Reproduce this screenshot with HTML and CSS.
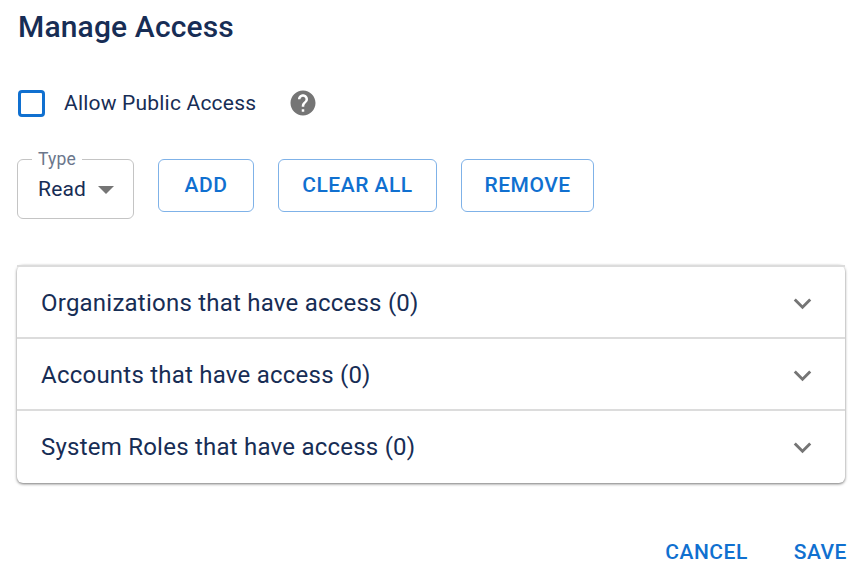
FILE: index.html
```html
<!DOCTYPE html>
<html lang="en">
<head>
  <meta charset="UTF-8">
  <title>Manage Access</title>
  <link rel="stylesheet" href="styles.css">
</head>
<body>
<div class="dialog">
  <h2 class="title">Manage Access</h2>

  <div class="public-row">
    <span class="checkbox"></span>
    <span class="public-label">Allow Public Access</span>
    <svg class="help" width="30" height="30" viewBox="0 0 24 24"><path d="M12 2C6.48 2 2 6.48 2 12s4.48 10 10 10 10-4.48 10-10S17.52 2 12 2zm1 17h-2v-2h2v2zm2.07-7.75l-.9.92C13.45 12.9 13 13.5 13 15h-2v-.5c0-1.1.45-2.1 1.17-2.83l1.24-1.26c.37-.36.59-.86.59-1.41 0-1.1-.9-2-2-2s-2 .9-2 2H8c0-2.21 1.79-4 4-4s4 1.79 4 4c0 .88-.36 1.68-.93 2.25z"/></svg>
  </div>

  <div class="actions-row">
    <div class="type-select">
      <span class="type-label">Type</span>
      <span class="type-value">Read</span>
      <span class="type-caret"></span>
    </div>
    <button class="btn btn-add">ADD</button>
    <button class="btn btn-clear">CLEAR ALL</button>
    <button class="btn btn-remove">REMOVE</button>
  </div>

  <div class="accordion">
    <div class="acc-row">
      <span>Organizations that have access (0)</span>
      <svg class="chevron" width="35" height="35" viewBox="0 0 24 24"><path d="M7.41 8.59 12 13.17l4.59-4.58L18 10l-6 6-6-6z"/></svg>
    </div>
    <div class="acc-row">
      <span>Accounts that have access (0)</span>
      <svg class="chevron" width="35" height="35" viewBox="0 0 24 24"><path d="M7.41 8.59 12 13.17l4.59-4.58L18 10l-6 6-6-6z"/></svg>
    </div>
    <div class="acc-row">
      <span>System Roles that have access (0)</span>
      <svg class="chevron" width="35" height="35" viewBox="0 0 24 24"><path d="M7.41 8.59 12 13.17l4.59-4.58L18 10l-6 6-6-6z"/></svg>
    </div>
  </div>

  <div class="footer">
    <button class="link-btn">CANCEL</button>
    <button class="link-btn">SAVE</button>
  </div>
</div>
</body>
</html>
```

FILE: styles.css
```css
html, body {
  margin: 0;
  height: 100%;
  overflow: hidden;
  background: #fff;
}

body {
  font-family: Roboto, "Liberation Sans", sans-serif;
  color: #172d55;
}

.dialog {
  padding: 0 20px 0 17px;
}

.title {
  margin: 0 0 0 1px;
  padding-top: 9px;
  font-size: 30px;
  line-height: 36px;
  font-weight: 500;
  letter-spacing: 0.15px;
}

.public-row {
  display: flex;
  align-items: center;
  margin-top: 40px;
  height: 36px;
}

.checkbox {
  width: 27px;
  height: 27px;
  margin-left: 1px;
  box-sizing: border-box;
  border: 3px solid #1070d0;
  border-radius: 4px;
}

.public-label {
  margin-left: 19px;
  font-size: 21px;
  letter-spacing: 0.2px;
}

.help {
  margin-left: 32px;
  fill: #757575;
}

.actions-row {
  display: flex;
  align-items: flex-start;
  margin-top: 38px;
}

.type-select {
  position: relative;
  box-sizing: border-box;
  width: 117px;
  height: 60px;
  border: 1px solid #c4c4c4;
  border-radius: 6px;
  padding: 17px 0 0 20px;
  font-size: 21px;
  letter-spacing: 0.2px;
}

.type-label {
  position: absolute;
  top: -11px;
  left: 14px;
  padding: 0 6px;
  background: #fff;
  color: #6b778c;
  font-size: 17.5px;
  letter-spacing: 0.2px;
  line-height: 20px;
}

.type-caret {
  position: absolute;
  top: 26px;
  left: 80px;
  border-left: 8px solid transparent;
  border-right: 8px solid transparent;
  border-top: 8px solid #757575;
}

.btn {
  box-sizing: border-box;
  height: 53px;
  background: #fff;
  border: 1px solid #7fb2e8;
  border-radius: 6px;
  color: #1070d0;
  font-family: inherit;
  font-size: 21px;
  font-weight: 500;
  letter-spacing: 0.5px;
  padding: 0 0 1px;
}

.btn-add { width: 96px; margin-left: 24px; }
.btn-clear { width: 159px; margin-left: 24px; }
.btn-remove { width: 133px; margin-left: 24px; }

.accordion {
  margin-top: 46px;
  border-radius: 6px;
  box-shadow: 0 1px 3px rgba(0, 0, 0, 0.55);
}

.acc-row {
  display: flex;
  justify-content: space-between;
  align-items: center;
  box-sizing: border-box;
  height: 72px;
  padding: 2px 25px 0 24px;
  border-top: 2px solid #dcdcdc;
  font-size: 24px;
  letter-spacing: 0.23px;
}

.acc-row:last-child {
  height: 74px;
  padding-top: 0;
}

.chevron {
  fill: #757575;
}

.footer {
  display: flex;
  justify-content: flex-end;
  gap: 46px;
  margin-top: 57px;
  margin-right: -2px;
}

.link-btn {
  background: none;
  border: none;
  padding: 0;
  color: #1070d0;
  font-family: inherit;
  font-size: 21px;
  font-weight: 500;
  letter-spacing: 0.5px;
}
```
